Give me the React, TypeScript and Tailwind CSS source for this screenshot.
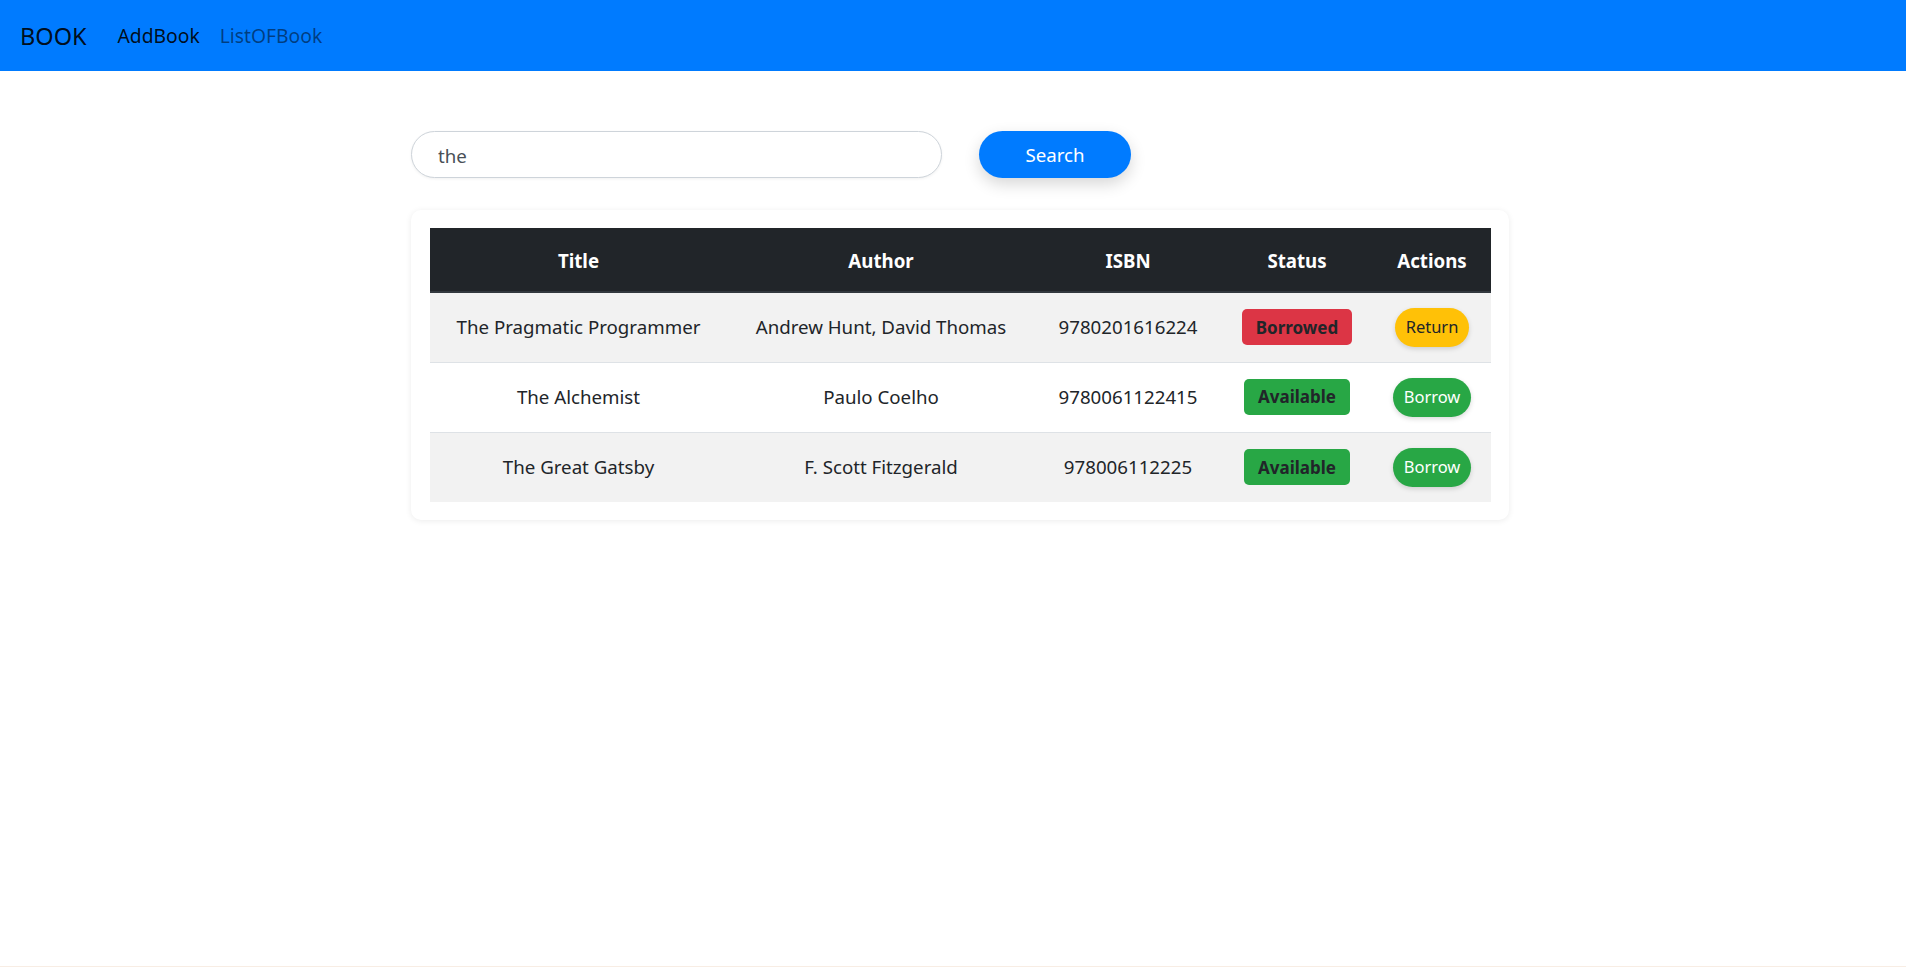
import { useState } from "react";

type Book = {
  title: string;
  author: string;
  isbn: string;
  borrowed: boolean;
};

const BOOKS: Book[] = [
  { title: "The Pragmatic Programmer", author: "Andrew Hunt, David Thomas", isbn: "9780201616224", borrowed: true },
  { title: "The Alchemist", author: "Paulo Coelho", isbn: "9780061122415", borrowed: false },
  { title: "The Great Gatsby", author: "F. Scott Fitzgerald", isbn: "978006112225", borrowed: false },
];

const FONT = "font-['Noto_Sans','Open_Sans',sans-serif]";

export default function App() {
  const [query, setQuery] = useState("the");
  const [books, setBooks] = useState(BOOKS);

  const toggle = (isbn: string) =>
    setBooks((list) => list.map((b) => (b.isbn === isbn ? { ...b, borrowed: !b.borrowed } : b)));

  return (
    <div className={`${FONT} flex min-h-screen flex-col bg-white text-[18.7px] text-[#212529]`}>
      <nav className="flex h-[71px] items-center bg-[#007bff] px-[20px] pt-[2px]">
        <a className="mr-[21px] text-[23.5px] text-black/90">BOOK</a>
        <a className="px-[10px] text-[19.3px] text-black/90">AddBook</a>
        <a className="px-[10px] text-[19.3px] text-black/50">ListOFBook</a>
      </nav>

      <main className="ml-[411px] w-[1098px] flex-1">
        <div className="mt-[60px] flex items-center gap-[37px]">
          <input
            value={query}
            onChange={(e) => setQuery(e.target.value)}
            className="h-[47px] w-[531px] rounded-full border border-[#ced4da] bg-white pt-[2px] pl-[26px] text-[18.7px] text-[#495057] shadow-[0_1px_3px_rgba(0,0,0,0.06)] outline-none"
          />
          <button className="h-[47px] w-[152px] rounded-full bg-[#007bff] pt-[2px] text-[18.7px] text-white shadow-[0_6px_16px_rgba(0,0,0,0.16)]">
            Search
          </button>
        </div>

        <div className="mt-[32px] rounded-[10px] bg-white p-[18px] pl-[19px] shadow-[0_1px_6px_rgba(0,0,0,0.08)]">
          <table className="w-[1061px] table-fixed border-collapse text-center">
            <colgroup>
              <col className="w-[297px]" />
              <col className="w-[308px]" />
              <col className="w-[186px]" />
              <col className="w-[152px]" />
              <col className="w-[118px]" />
            </colgroup>
            <thead>
              <tr className="h-[64px] border-b-2 border-[#32383e] bg-[#212529] text-white">
                <th className="pt-[4px] font-bold">Title</th>
                <th className="pt-[4px] font-bold">Author</th>
                <th className="pt-[4px] font-bold">ISBN</th>
                <th className="pt-[4px] font-bold">Status</th>
                <th className="pt-[4px] font-bold">Actions</th>
              </tr>
            </thead>
            <tbody>
              {books.map((book, i) => (
                <tr
                  key={book.isbn}
                  className={`h-[70px] border-t border-[#dee2e6] ${i % 2 === 0 ? "bg-[#f2f2f2]" : "bg-white"}`}
                >
                  <td>{book.title}</td>
                  <td>{book.author}</td>
                  <td>{book.isbn}</td>
                  <td>
                    <span
                      className={`inline-flex h-[36px] items-center rounded-[5px] px-[14px] text-[17px] font-bold text-[#212529] ${
                        book.borrowed ? "bg-[#dc3545]" : "bg-[#28a745]"
                      }`}
                    >
                      {book.borrowed ? "Borrowed" : "Available"}
                    </span>
                  </td>
                  <td>
                    <button
                      onClick={() => toggle(book.isbn)}
                      className={`inline-flex h-[39px] items-center rounded-full px-[11px] text-[16.5px] shadow-[0_2px_5px_rgba(0,0,0,0.15)] ${
                        book.borrowed ? "bg-[#ffc107] text-[#212529]" : "bg-[#28a745] text-white"
                      }`}
                    >
                      {book.borrowed ? "Return" : "Borrow"}
                    </button>
                  </td>
                </tr>
              ))}
            </tbody>
          </table>
        </div>
      </main>

      <div className="h-[3px] border-t border-[#f8ede4]" />
    </div>
  );
}
